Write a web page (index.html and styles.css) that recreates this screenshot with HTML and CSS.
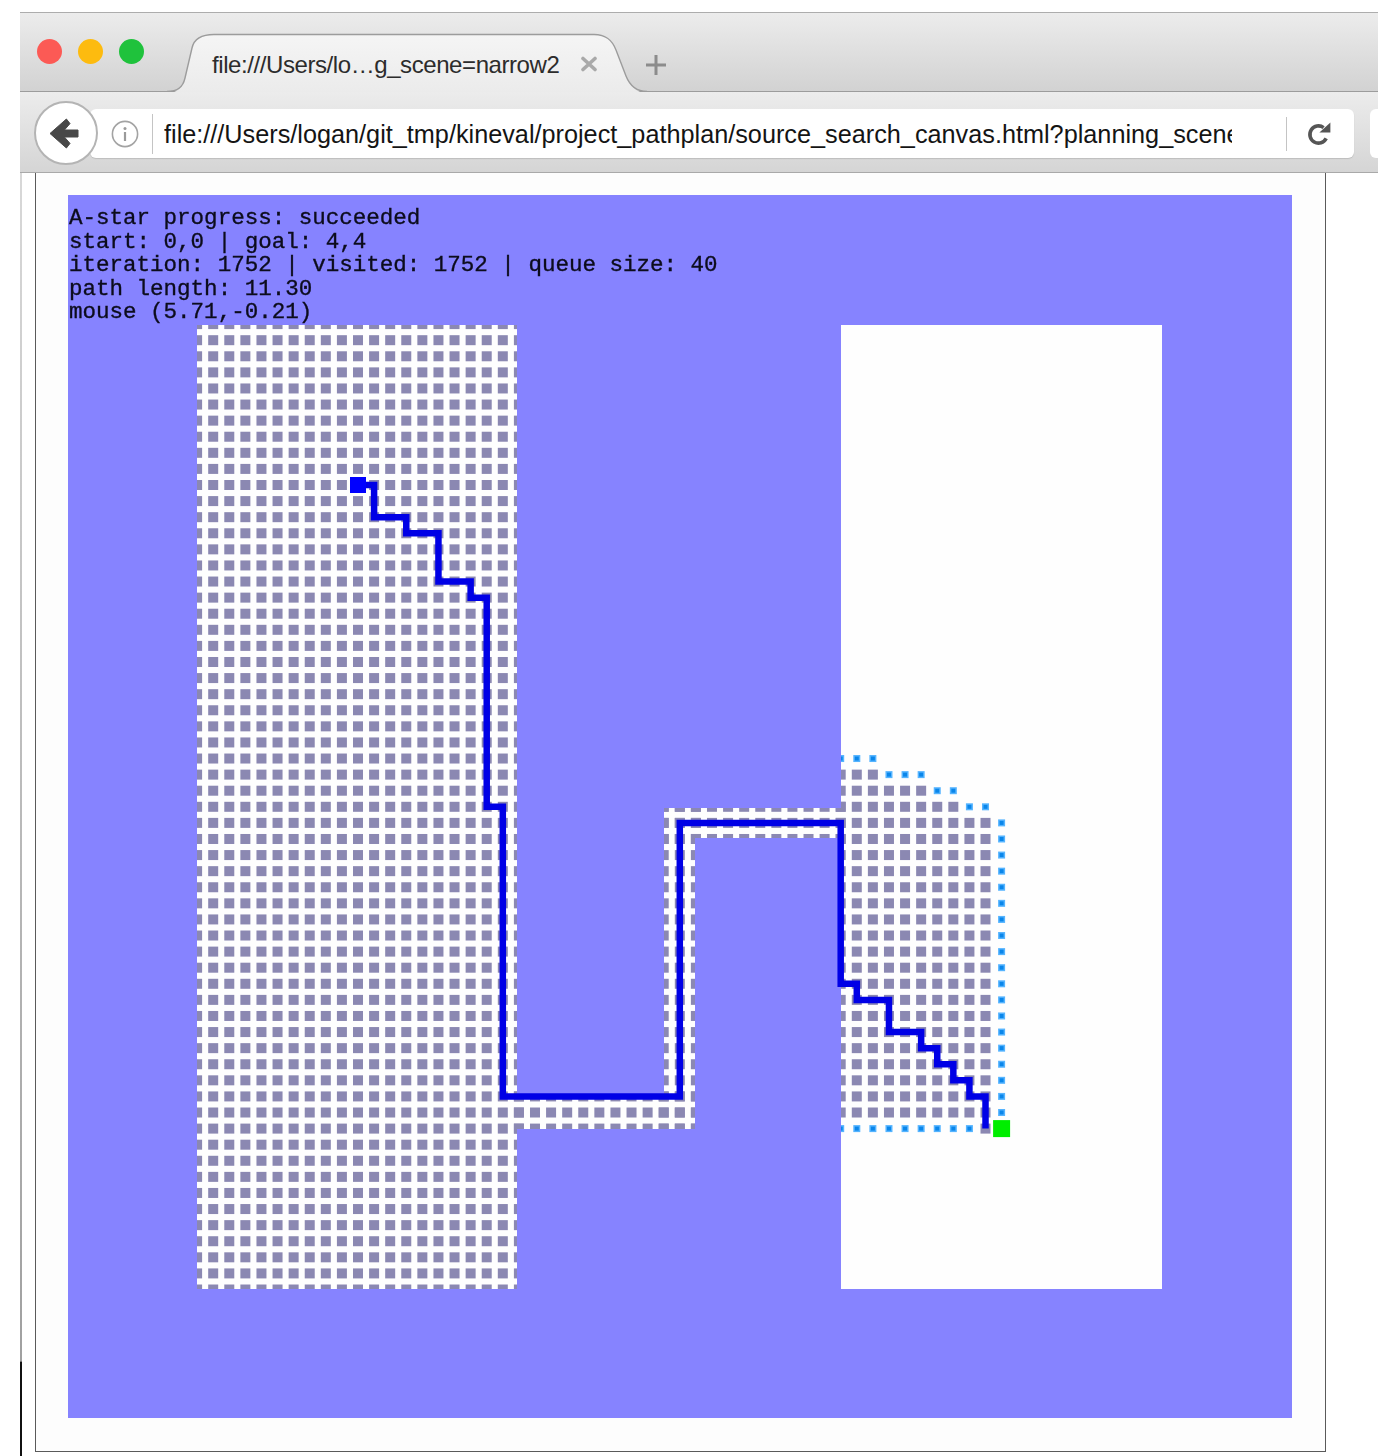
FILE: index.html
```html
<!DOCTYPE html>
<html lang="en">
<head>
<meta charset="utf-8">
<title>Path planning</title>
<link rel="stylesheet" href="styles.css">
</head>
<body>
<div class="window">
  <header class="titlebar">
    <div class="lights">
      <span class="light red"></span>
      <span class="light yellow"></span>
      <span class="light green"></span>
    </div>
    <div class="tab">
      <svg class="tab-shape" viewBox="165 33 480 60" width="480" height="60" aria-hidden="true">
        <defs>
          <linearGradient id="tabfill" x1="0" y1="0" x2="0" y2="1">
            <stop offset="0" stop-color="#f5f5f5"/>
            <stop offset="1" stop-color="#ebebeb"/>
          </linearGradient>
        </defs>
        <path fill="url(#tabfill)" stroke="none" d="M165 93C176 93 181 87 183 78L190 48C192 39 200 34.5 212 34.5H592C604 34.5 610 40 614 50L624 76C628 86 634 93 645 93Z"/>
        <path fill="none" stroke="#9c9c9c" stroke-width="1.4" d="M165 91.5C176 91.5 181 87 183 78L190 48C192 39 200 34.5 212 34.5H592C604 34.5 610 40 614 50L624 76C628 86 634 91.5 645 91.5"/>
      </svg>
      <span class="tab-label">file:///Users/lo…g_scene=narrow2</span>
      <svg class="tab-close" viewBox="0 0 18 16" width="18" height="16" aria-hidden="true">
        <path d="M3 2.5L15 13.5M15 2.5L3 13.5" stroke="#a9a9a9" stroke-width="3.6" stroke-linecap="round"/>
      </svg>
    </div>
    <svg class="new-tab" viewBox="0 0 22 22" width="22" height="22" aria-hidden="true">
      <path d="M11 1V21M1 11H21" stroke="#8c8c8c" stroke-width="3"/>
    </svg>
  </header>

  <nav class="toolbar">
    <div class="address">
      <svg class="info" viewBox="0 0 28 28" width="28" height="28" aria-hidden="true">
        <circle cx="14" cy="14" r="12.6" fill="#fff" stroke="#a3a3a3" stroke-width="1.6"/>
        <circle cx="14" cy="8.6" r="1.5" fill="#9a9a9a"/>
        <path d="M14 12V21" stroke="#9a9a9a" stroke-width="2.2"/>
      </svg>
      <span class="divider"></span>
      <span class="url">file:///Users/logan/git_tmp/kineval/project_pathplan/source_search_canvas.html?planning_scene=narrow2</span>
      <span class="divider end"></span>
      <svg class="reload" viewBox="0 0 26 26" width="26" height="26" aria-hidden="true">
        <path d="M20.2 17.4A8.6 8.6 0 1 1 17.6 6.6" fill="none" stroke="#555" stroke-width="3.6"/>
        <path d="M13.4 11.6L24.4 1.6V11.6Z" fill="#555"/>
      </svg>
    </div>
    <div class="extension"></div>
    <button class="back" type="button" aria-label="Back">
      <svg viewBox="0 0 30 31" width="30" height="31" aria-hidden="true">
        <path d="M29 12H15.4L21 5.6 17.4 1 1 15.5 17.4 30 21 25.4 15.4 19H29Z" fill="#484848" stroke="#484848" stroke-width="1" stroke-linejoin="round"/>
      </svg>
    </button>
  </nav>

  <main class="page">
    <span class="edge"></span>
    <section class="frame">
      <div class="scene">
        <canvas id="world" width="1224" height="1223"></canvas>
        <div class="status">
          <div>A-star progress: succeeded</div>
          <div>start: 0,0 | goal: 4,4</div>
          <div>iteration: 1752 | visited: 1752 | queue size: 40</div>
          <div>path length: 11.30</div>
          <div>mouse (5.71,-0.21)</div>
        </div>
      </div>
    </section>
  </main>
</div>
<script src="planner.js"></script>
</body>
</html>
```
FILE: styles.css
```css
* { box-sizing: border-box; }

html, body { margin: 0; height: 100%; background: #fff; }

body { padding-top: 12px; overflow: hidden; font-family: "Liberation Sans", Arial, sans-serif; }

.window { margin-left: 20px; height: 1444px; display: flex; flex-direction: column; }

.titlebar {
  position: relative;
  flex: none;
  height: 80px;
  display: flex;
  border-top: 1px solid #adadad;
  border-bottom: 1px solid #9c9c9c;
  background: linear-gradient(#ececec, #d2d2d2);
}

.lights { display: flex; gap: 16px; padding: 26px 0 0 17px; }

.light { width: 25px; height: 25px; border-radius: 50%; }
.red { background: #fc5a55; }
.yellow { background: #fdbb0f; }
.green { background: #1fc23c; }

.tab {
  position: relative;
  margin-left: 45px;
  width: 435px;
  height: 79px;
  display: flex;
  align-items: flex-start;
}

.tab-shape { position: absolute; left: -22px; top: 20px; }

.tab-label {
  position: relative;
  margin: 38px 0 0 23px;
  font-size: 24px;
  line-height: 28px;
  letter-spacing: -0.42px;
  color: #2c2c2c;
  white-space: nowrap;
}

.tab-close { position: absolute; left: 391px; top: 43px; }

.new-tab { position: absolute; left: 625px; top: 41px; }

.toolbar {
  position: relative;
  flex: none;
  height: 81px;
  display: flex;
  gap: 16px;
  padding: 17px 0 0 70px;
  border-bottom: 1px solid #a9a9a9;
  background: linear-gradient(#ececec, #d5d5d5);
}

.address {
  flex: none;
  width: 1264px;
  height: 49px;
  display: flex;
  align-items: center;
  padding-left: 21px;
  border-radius: 6px;
  background: #fff;
  box-shadow: 0 1px 1px #bdbdbd;
}

.info { flex: none; }

.divider { flex: none; width: 1px; height: 40px; margin-left: 13px; background: #c4c4c4; }
.divider.end { height: 34px; margin-left: 54px; }

.url {
  flex: none;
  width: 1068px;
  margin-left: 11px;
  overflow: hidden;
  font-size: 25.25px;
  line-height: 30px;
  color: #141414;
  white-space: nowrap;
}

.reload { flex: none; margin-left: 19px; }

.extension { flex: 1; height: 49px; border-radius: 6px 0 0 6px; background: #fff; }

.back {
  position: absolute;
  left: 14px;
  top: 9px;
  width: 64px;
  height: 64px;
  padding: 0 4px 0 0;
  display: flex;
  align-items: center;
  justify-content: center;
  border: 2px solid #b4b4b4;
  border-radius: 50%;
  background: #fff;
}

.page { flex: 1; display: flex; background: #fff; }

.edge {
  flex: none;
  width: 2px;
  background: linear-gradient(#d8d8d8 0, #a0a0a0 92.6%, #111 92.7%, #111 100%);
}

.frame {
  flex: none;
  width: 1291px;
  height: 1279px;
  margin-left: 13px;
  padding: 22px 0 0 32px;
  border: 1px solid #5a5a5a;
  border-top: 0;
  background: #fdfdfd;
}

.scene { position: relative; width: 1224px; height: 1223px; }

#world { display: block; }

.status {
  position: absolute;
  left: 1px;
  top: 12px;
  font-family: "Liberation Mono", "Courier New", monospace;
  font-size: 22.53px;
  line-height: 23.5px;
  color: #0c0c1c;
  white-space: nowrap;
  -webkit-text-stroke: 0.35px #0c0c1c;
}
```
FILE: planner.js
```js
// Draws the planning world: free space, visited cells, frontier, path and endpoints.
(function () {
  var ctx = document.getElementById('world').getContext('2d');

  var STEP = 16.09;
  var ORIGIN_X = 358 - 68;
  var ORIGIN_Y = 485 - 195;
  var px = function (i) { return ORIGIN_X + STEP * i; };
  var py = function (k) { return ORIGIN_Y + STEP * k; };

  // Free space as [x0, y0, x1, y1] in canvas pixels; everything else is obstacle.
  var free = [
    [129, 130, 449, 1094],
    [773, 130, 1094, 1094],
    [449, 901, 627, 934],
    [596, 613, 627, 934],
    [596, 613, 773, 643]
  ];

  ctx.fillStyle = '#8683ff';
  ctx.fillRect(0, 0, 1224, 1223);

  ctx.fillStyle = '#fefefe';
  free.forEach(function (r) { ctx.fillRect(r[0], r[1], r[2] - r[0], r[3] - r[1]); });

  ctx.save();
  ctx.beginPath();
  free.forEach(function (r) { ctx.rect(r[0], r[1], r[2] - r[0], r[3] - r[1]); });
  ctx.clip();

  function visit(i0, i1, k0, k1) {
    ctx.fillStyle = '#8b88b2';
    for (var i = i0; i <= i1; i++) {
      for (var k = k0; k <= k1; k++) {
        ctx.fillRect(px(i) - 5, py(k) - 5, 10, 10);
      }
    }
  }

  function frontier(i, k) {
    ctx.fillStyle = '#55b4ff';
    ctx.fillRect(px(i) - 3.5, py(k) - 3.5, 7, 7);
    ctx.fillStyle = '#0a86ea';
    ctx.fillRect(px(i) - 2, py(k) - 2, 4, 4);
  }

  // Left room and the corridor that links it to the right room.
  visit(-10, 10, -10, 50);
  visit(10, 21, 38, 40);
  visit(19, 21, 20, 40);
  visit(19, 30, 20, 22);

  // Visited part of the right room.
  visit(30, 32, 18, 18);
  visit(30, 35, 19, 19);
  visit(30, 37, 20, 20);
  visit(30, 39, 21, 39);
  visit(39, 39, 40, 40);

  // Open queue along the edge of the visited part.
  [[30, 17], [31, 17], [32, 17], [33, 18], [34, 18], [35, 18], [36, 19], [37, 19], [38, 20], [39, 20]]
    .forEach(function (c) { frontier(c[0], c[1]); });
  for (var k = 21; k <= 39; k++) frontier(40, k);
  for (var i = 30; i <= 38; i++) frontier(i, 40);

  ctx.restore();

  // Route found by the search, in grid steps from start to goal.
  var route = [
    [0, 0], [1, 0], [1, 2], [3, 2], [3, 3], [5, 3], [5, 6], [7, 6], [7, 7], [8, 7],
    [8, 20], [9, 20], [9, 38], [20, 38], [20, 21], [30, 21], [30, 31], [31, 31],
    [31, 32], [33, 32], [33, 34], [35, 34], [35, 35], [36, 35], [36, 36], [37, 36],
    [37, 37], [38, 37], [38, 38], [39, 38], [39, 40]
  ];
  ctx.strokeStyle = '#0000e6';
  ctx.lineWidth = 6.5;
  ctx.lineJoin = 'miter';
  ctx.beginPath();
  route.forEach(function (p, n) {
    if (n === 0) ctx.moveTo(px(p[0]), py(p[1]));
    else ctx.lineTo(px(p[0]), py(p[1]));
  });
  ctx.stroke();

  // Start and goal markers.
  ctx.fillStyle = '#0000ff';
  ctx.fillRect(px(0) - 8, py(0) - 8, 16, 16);
  ctx.fillStyle = '#00ee00';
  ctx.fillRect(px(40) - 8.5, py(40) - 8.5, 17, 17);
})();
```
